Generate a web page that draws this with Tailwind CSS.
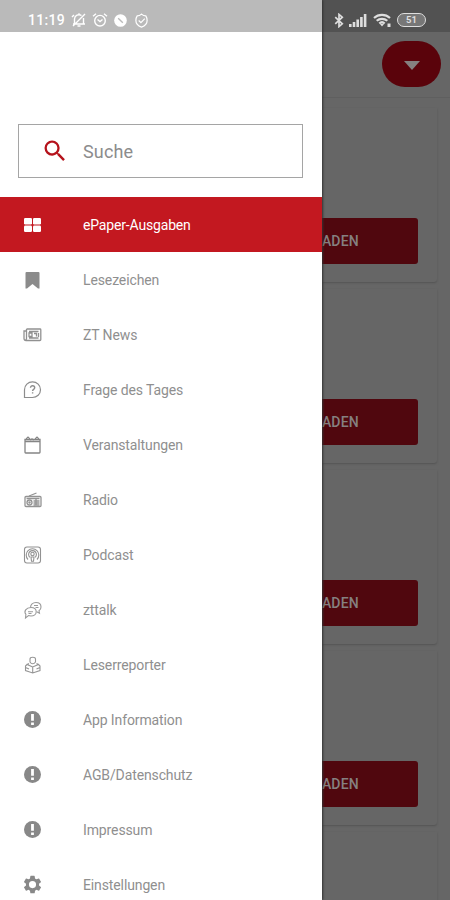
<!DOCTYPE html>
<html lang="de">
<head>
<meta charset="utf-8">
<meta name="viewport" content="width=device-width, initial-scale=1">
<title>ePaper</title>
<script src="https://cdn.jsdelivr.net/npm/@tailwindcss/browser@4"></script>
</head>
<body class="flex h-[900px] w-[450px] overflow-hidden bg-[#666] font-['Roboto',sans-serif]">
<aside class="relative z-10 flex w-[322px] shrink-0 flex-col bg-white shadow-[1px_0_2px_#333]">
  <div class="flex h-8 shrink-0 items-center bg-[#bababa] pt-2 pl-7 text-white">
    <span class="w-[43px] text-[14px] leading-none font-medium tracking-[0.3px]">11:19</span>
    <svg class="size-4" viewBox="0 0 16 16" fill="none" stroke="currentColor" stroke-width="1.4"><path d="M3.500 11.500V7a4.500 4.500 0 0 1 7-3.500M12.500 6v5.500M2 12h12M6.500 14h3M2 14 14 2M8 1.200V3M1 5l2-2"/></svg>
    <svg class="ml-[5px] size-4" viewBox="0 0 16 16" fill="none" stroke="currentColor" stroke-width="1.4"><circle cx="8" cy="8.700" r="5.300"/><path d="M1 4.200 4 1.800M15 4.200 12 1.800M5.500 7.500 8 9.500l2.500-2"/></svg>
    <svg class="ml-[6px] size-[13px]" viewBox="0 0 14 14"><circle cx="7" cy="7" r="6.800" fill="currentColor"/><path d="m4.500 4.500 5 5" stroke="#bababa" stroke-width="1.500"/></svg>
    <svg class="ml-[7px] size-[15px]" viewBox="0 0 16 16" fill="none" stroke="currentColor" stroke-width="1.300"><path d="M8 1.200c1.500 1.300 3 1.800 4.600 1.800.9 1.300 1.400 3 1.400 5 0 3.500-2.200 5.700-6 7-3.800-1.300-6-3.500-6-7 0-2 .5-3.700 1.400-5C5 3 6.500 2.500 8 1.200ZM5 8l2.400 2.300L11.500 6"/></svg>
  </div>
  <div class="mt-[92px] ml-[18px] flex h-[54px] w-[285px] shrink-0 items-center border border-[#a5a5a5] pl-[22px]">
    <svg class="size-[28px]" viewBox="0 0 24 24" fill="#b5121b"><path d="M15.500 14h-.79l-.28-.27A6.470 6.470 0 0 0 16 9.500 6.500 6.500 0 1 0 9.500 16c1.610 0 3.090-.59 4.230-1.570l.27.28v.79l5 4.990L20.490 19l-4.990-5zm-6 0C7.010 14 5 11.990 5 9.500S7.010 5 9.500 5 14 7.010 14 9.500 11.990 14 9.500 14z"/></svg>
    <span class="ml-[14px] text-[18px] tracking-[0.15px] text-[#8c8c8c]">Suche</span>
  </div>
  <nav class="mt-[19px] flex flex-col text-[14px] leading-none tracking-[-0.12px] text-[#8f8f8f] *:flex *:h-[55px] *:shrink-0 *:items-center *:gap-10 *:pt-px *:pl-[22px] [&_svg]:size-[21px] [&_svg]:shrink-0">
    <a class="bg-[#c31820] tracking-[-0.17px] text-white"><svg viewBox="0 0 21 21" fill="currentColor"><rect x="2" y="3" width="8" height="6.500" rx="1.200"/><rect x="11" y="3" width="8" height="6.500" rx="1.200"/><rect x="2" y="10.500" width="8" height="6.500" rx="1.200"/><rect x="11" y="10.500" width="8" height="6.500" rx="1.200"/></svg><span>ePaper-Ausgaben</span></a>
    <a><svg viewBox="0 0 21 21" fill="#8b8b8b"><path d="M3.500 3q0-1 1-1h12q1 0 1 1v15.500H16L10.500 14 5 18.500H3.500z"/></svg><span>Lesezeichen</span></a>
    <a><svg viewBox="0 0 21 21" fill="none" stroke="#919191" stroke-width="1.300"><path d="M4.500 4h13.500q.8 0 .8.800v9.700q0 1-1 1H4q-2 0-2-2V6h2.300M4.500 4v9.500q0 1.500-1.200 1.700M7 6.500h9.500M7 13h9.500M7 8v3.500h3V8zM12 8.500h2.500v3M16.500 8v4"/></svg><span>ZT News</span></a>
    <a><svg viewBox="0 0 21 21" fill="none" stroke="#8d8d8d" stroke-width="1.200"><path d="M2.500 17.500V9.700a8 7.800 0 1 1 8 7.800z"/><path d="M8.500 7.800c0-2.800 4.200-2.500 4.200 0 0 1.600-2.100 1.600-2.100 3.200M10.600 12.200v1.300" stroke-width="1.400"/></svg><span>Frage des Tages</span></a>
    <a><svg viewBox="0 0 21 21" fill="none" stroke="#858585" stroke-width="1.300"><path d="M3 4.500h15V17.300q0 .7-.7.700H3.700q-.7 0-.7-.7zM3 6.500h15"/><path d="M4.500 5V3.500L6 2l1.500 1.500V5M13.500 5V3.500L15 2l1.500 1.500V5M8 5l2-1 2 1" stroke-width="1.200"/></svg><span>Veranstaltungen</span></a>
    <a><svg viewBox="0 0 21 21" fill="none" stroke="#939393" stroke-width="1.300"><rect x="3" y="6.500" width="16" height="10" rx="1"/><path d="M7 6 14.500 3M4.500 8.500h13M11.500 11h6M11.500 13h6M11.500 15h6M14 9v6"/><circle cx="7.500" cy="12.500" r="2.500"/><circle cx="7.500" cy="12.500" r=".6"/></svg><span>Radio</span></a>
    <a><svg viewBox="0 0 21 21" fill="none" stroke="#929292" stroke-width="1.100"><rect x="2.500" y="2" width="16" height="16" rx="2.500"/><path d="M6 14.500a6.300 6.300 0 1 1 9 0M7.800 12.300a3.900 3.900 0 1 1 5.400 0"/><circle cx="10.500" cy="9" r="1.700"/><path d="M9 12h3l-.5 4.200h-2z"/></svg><span>Podcast</span></a>
    <a><svg viewBox="0 0 21 21" fill="none" stroke="#9a9a9a" stroke-width="1.100"><path d="M8.500 7.500C8.500 4.500 10.800 2.500 14 2.500s5 2 5 4.500c0 1.800-.8 3-2 3.800l.5 2.500-2.800-1.500"/><path d="M9 7.500c3.200 0 5.200 1.700 5.200 4.200S12 16 9 16c-1 0-1.700-.1-2.500-.4L3.500 18l.4-3.700C1.500 11.500 4 7.500 9 7.500zM6 11.700h5M6.500 13.500h3M12 5.500h4M13.500 7.500h3"/></svg><span>zttalk</span></a>
    <a><svg viewBox="0 0 21 21" fill="none" stroke="#969696" stroke-width="1.100"><path d="M8 4q0-1.800 2.700-1.800T13.500 4v3q-1.200 1.800-2.800 1.800T8 7zM10.700 12 5 9.500 3.500 11v4.500l7.200 2.500 7.300-2.500V11l-1.500-1.500zV18M3.500 12.500 7 14M18 12.500 14.500 14M7 8.500l-2 1M14.500 8.500l2 1"/></svg><span>Leserreporter</span></a>
    <a><svg viewBox="0 0 21 21"><circle cx="10.500" cy="9.500" r="8.500" fill="#888"/><path d="M9.100 4h2.800v6.800H9.100zM9.100 12.500h2.800v2.500H9.100z" fill="#fff"/></svg><span>App Information</span></a>
    <a><svg viewBox="0 0 21 21"><circle cx="10.500" cy="9.500" r="8.500" fill="#888"/><path d="M9.100 4h2.800v6.800H9.100zM9.100 12.500h2.800v2.500H9.100z" fill="#fff"/></svg><span>AGB/Datenschutz</span></a>
    <a><svg viewBox="0 0 21 21"><circle cx="10.500" cy="9.500" r="8.500" fill="#888"/><path d="M9.100 4h2.800v6.800H9.100zM9.100 12.500h2.800v2.500H9.100z" fill="#fff"/></svg><span>Impressum</span></a>
    <a><svg viewBox="0.500 1.500 23 23" fill="#888"><path d="M19.140 12.940c.04-.3.060-.61.060-.94s-.02-.64-.07-.94l2.030-1.580a.49.49 0 0 0 .12-.61l-1.920-3.320a.49.49 0 0 0-.59-.22l-2.390.96a7 7 0 0 0-1.620-.94l-.36-2.540a.48.48 0 0 0-.48-.41h-3.840a.47.47 0 0 0-.47.410l-.36 2.540c-.59.240-1.130.570-1.620.940l-2.390-.96a.48.48 0 0 0-.59.220L2.740 8.870a.47.47 0 0 0 .12.610l2.030 1.580a6 6 0 0 0 0 1.880l-2.030 1.580a.49.49 0 0 0-.12.610l1.920 3.320c.12.220.370.290.590.220l2.390-.96c.5.380 1.030.7 1.620.940l.36 2.540c.05.240.240.410.480.410h3.840c.24 0 .44-.17.470-.41l.36-2.540a7 7 0 0 0 1.620-.94l2.390.96c.22.080.47 0 .59-.22l1.920-3.320a.47.47 0 0 0-.12-.61zM12 15.900a3.900 3.900 0 1 1 0-7.800 3.900 3.900 0 0 1 0 7.800z"/></svg><span>Einstellungen</span></a>
  </nav>
</aside>
<main class="flex w-32 shrink-0 flex-col overflow-hidden">
  <div class="flex h-8 shrink-0 items-center bg-[#525252] pt-2 pl-[11px] text-[#dedede]">
    <svg class="h-[15px] w-3" viewBox="0 0 12 16" fill="none" stroke="currentColor" stroke-width="1.800"><path d="m2 4.500 7.500 7L6 14.500v-13l3.500 3-7.500 7"/></svg>
    <svg class="ml-1 h-[14px] w-[18px]" viewBox="0 0 18 14" fill="currentColor"><path d="M0 11h2.600v3H0zM3.700 9h2.600v5H3.700zM7.400 6.500H10V14H7.400zM11.100 4h2.600v10h-2.600zM14.800 1h2.600v13h-2.600z"/></svg>
    <svg class="ml-[6px] h-[14px] w-[19px]" viewBox="0 0 19 14" fill="none" stroke="currentColor" stroke-width="2.200"><path d="M1 5a12 12 0 0 1 16 0M3.700 7.800a8 8 0 0 1 10.600 0M6.300 10.500a4 4 0 0 1 5.400 0"/><path d="m7 11 2 2.500 2-2.500zM14.500 10.500h3V14h-3z" fill="currentColor" stroke="none"/></svg>
    <span class="ml-[5px] flex h-[14px] w-[29px] items-center justify-center rounded-full border-[1.500px] border-current bg-[#777] text-[9.500px] leading-none font-bold">51</span>
  </div>
  <header class="flex h-[66px] shrink-0 items-start justify-end border-b border-[#5f5f5f] pt-[9px] pr-[9px]">
    <button class="flex h-[46px] w-[59px] items-center justify-center rounded-full bg-[#5a030b]"><span class="mt-0.5 border-x-[8px] border-t-[9px] border-x-transparent border-t-[#858080]"></span></button>
  </header>
  <section class="mt-[10px] flex flex-col gap-[7px] pr-[13px] *:flex *:h-[174px] *:shrink-0 *:items-end *:rounded-br-[3px] *:pr-[19px] *:pb-[18px] *:shadow-[0_1px_2px_#535353]">
    <article><div class="flex h-[46px] w-full items-center rounded-r-[3px] bg-[#50070e] text-[14px] font-medium tracking-[0.2px] text-[#858080]"><span class="-ml-2">LADEN</span></div></article>
    <article><div class="flex h-[46px] w-full items-center rounded-r-[3px] bg-[#50070e] text-[14px] font-medium tracking-[0.2px] text-[#858080]"><span class="-ml-2">LADEN</span></div></article>
    <article><div class="flex h-[46px] w-full items-center rounded-r-[3px] bg-[#50070e] text-[14px] font-medium tracking-[0.2px] text-[#858080]"><span class="-ml-2">LADEN</span></div></article>
    <article><div class="flex h-[46px] w-full items-center rounded-r-[3px] bg-[#50070e] text-[14px] font-medium tracking-[0.2px] text-[#858080]"><span class="-ml-2">LADEN</span></div></article>
    <article></article>
  </section>
</main>
</body>
</html>
